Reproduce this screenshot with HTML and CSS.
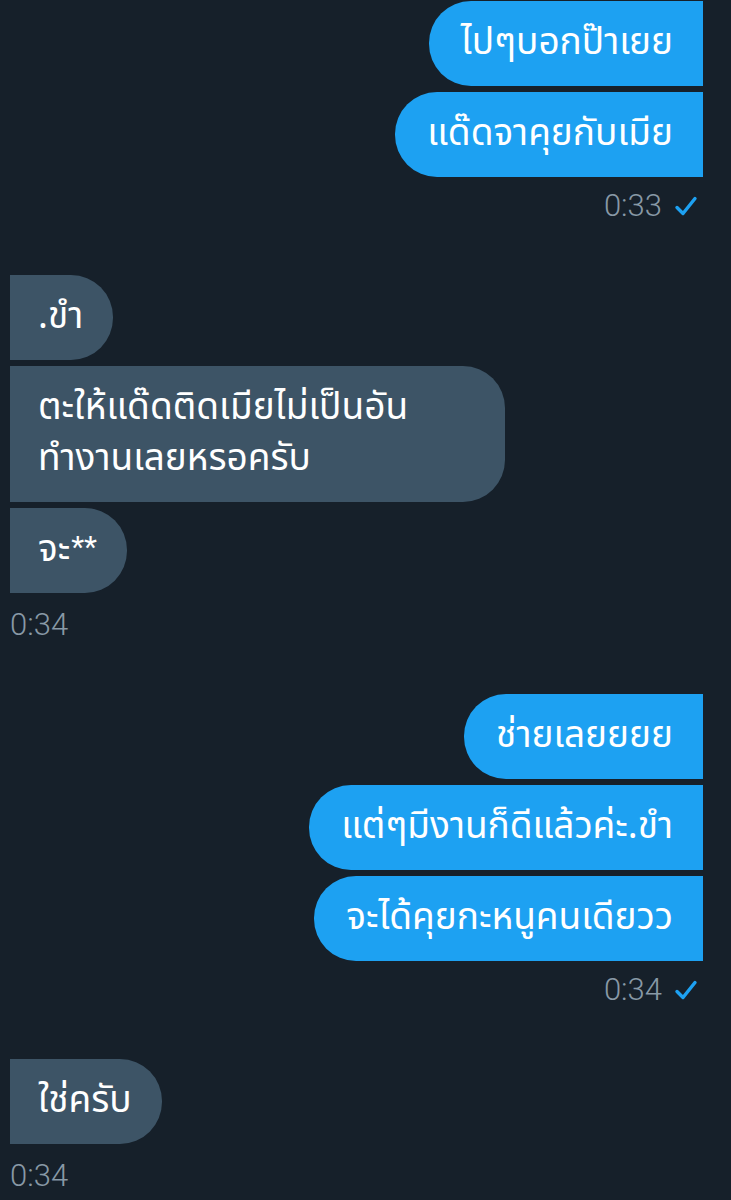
FILE: index.html
```html
<!DOCTYPE html>
<html lang="th">
<head>
<meta charset="utf-8">
<link rel="stylesheet" href="styles.css">
</head>
<body>
<div class="chat">
  <div class="group sent">
    <div class="bubble">ไปๆบอกป๊าเยย</div>
    <div class="bubble">แด๊ดจาคุยกับเมีย</div>
    <div class="ts">0:33 <svg class="check" viewBox="0 0 24 24" width="24" height="24"><polyline points="3,13.5 9,19.5 21,4.5" fill="none" stroke="#1da1f2" stroke-width="3.4" stroke-linecap="round" stroke-linejoin="round"/></svg></div>
  </div>
  <div class="group recv">
    <div class="bubble">.ขำ</div>
    <div class="bubble wide">ตะให้แด๊ดติดเมียไม่เป็นอัน<br>ทำงานเลยหรอครับ</div>
    <div class="bubble">จะ<span class="ast">**</span></div>
    <div class="ts">0:34</div>
  </div>
  <div class="group sent">
    <div class="bubble">ช่ายเลยยยย</div>
    <div class="bubble">แต่ๆมีงานก็ดีแล้วค่ะ.ขำ</div>
    <div class="bubble">จะได้คุยกะหนูคนเดียวว</div>
    <div class="ts">0:34 <svg class="check" viewBox="0 0 24 24" width="24" height="24"><polyline points="3,13.5 9,19.5 21,4.5" fill="none" stroke="#1da1f2" stroke-width="3.4" stroke-linecap="round" stroke-linejoin="round"/></svg></div>
  </div>
  <div class="group recv">
    <div class="bubble">ใช่ครับ</div>
    <div class="ts">0:34</div>
  </div>
</div>
</body>
</html>
```
FILE: styles.css
```css
html, body {
  margin: 0;
  padding: 0;
  background: #16202a;
}
.chat {
  width: 731px;
  padding: 1px 28px 0 10px;
  box-sizing: border-box;
  display: flex;
  flex-direction: column;
  font-family: "Noto Sans Thai", "Noto Sans", "DejaVu Sans", sans-serif;
}
.group {
  display: flex;
  flex-direction: column;
  gap: 6px;
  margin-bottom: 49px;
}
.group.sent { align-items: flex-end; }
.group.recv { align-items: flex-start; }
.bubble {
  color: #ffffff;
  font-size: 37px;
  line-height: 51px;
  height: 51px;
  padding: 17px 30px 17px 28px;
  white-space: nowrap;
}
.sent .bubble {
  background: #1da1f2;
  border-radius: 42px 0 0 42px;
  padding-left: 32px;
}
.recv .bubble {
  background: #3d5466;
  border-radius: 0 42px 42px 0;
}
.recv .bubble.wide {
  width: 495px;
  height: auto;
  box-sizing: border-box;
}
.ast {
  font-family: Roboto, "Liberation Sans", sans-serif;
  font-size: 30px;
  line-height: 1;
  vertical-align: 4px;
  margin-left: 1px;
}
.ts {
  font-family: Roboto, "Liberation Sans", sans-serif;
  font-weight: 300;
  font-size: 31px;
  line-height: 40px;
  height: 40px;
  color: #8899a6;
  display: flex;
  align-items: center;
  gap: 12px;
  margin-top: 3px;
}
.recv .ts { margin-top: 6px; }
.check {
  width: 24px;
  height: 24px;
  margin-right: 5px;
}
```
